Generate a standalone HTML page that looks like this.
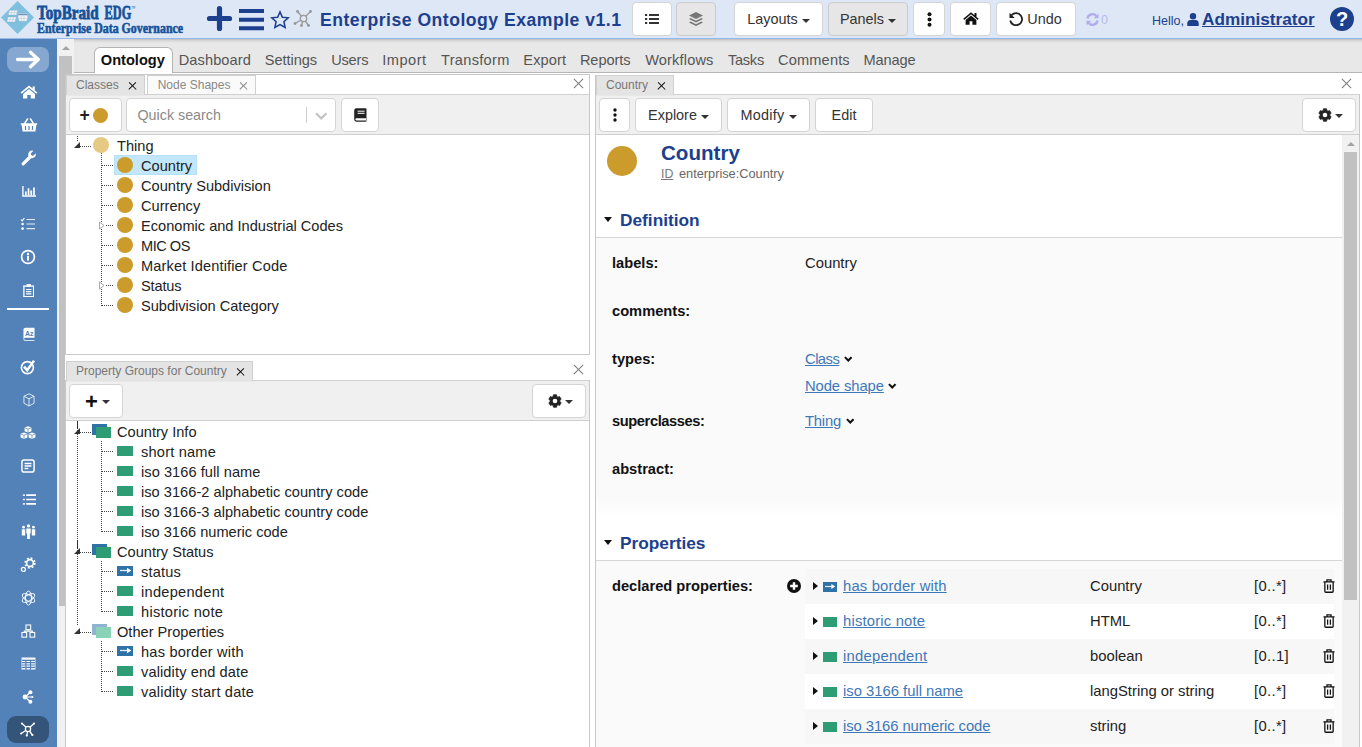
<!DOCTYPE html>
<html lang="en">
<head>
<meta charset="utf-8">
<title>TopBraid EDG - Enterprise Ontology Example v1.1</title>
<style>
*{box-sizing:border-box;margin:0;padding:0}
html,body{width:1362px;height:747px;overflow:hidden;background:#fff}
body{font-family:"Liberation Sans",sans-serif;font-size:14.6px;color:#222;position:relative}
.abs{position:absolute}
a{color:#3f78b8;text-decoration:underline}
/* header */
#hdr{position:absolute;left:0;top:0;width:1362px;height:40px;background:#dee7f6;border-bottom:1px solid #b9d0f1}
#hdr:after{content:"";position:absolute;left:0;top:38px;width:100%;height:1px;background:#94b8ea}
.logo1{position:absolute;left:37px;top:.6px;-webkit-text-stroke:.8px #13529a;word-spacing:2.700px;font-family:"Liberation Serif",serif;font-weight:bold;font-size:18.800px;color:#13529a;transform-origin:0 0;transform:scaleX(.805);white-space:nowrap;line-height:24px}
.logo2{position:absolute;left:37px;top:20px;-webkit-text-stroke:.55px #13529a;font-family:"Liberation Serif",serif;font-weight:bold;font-size:14px;color:#13529a;transform-origin:0 0;transform:scaleX(.85);white-space:nowrap;line-height:18px}
.title{position:absolute;left:320px;top:8px;font-weight:bold;font-size:17.6px;letter-spacing:.5px;color:#1c3f8e;white-space:nowrap;line-height:24px}
.btn{position:absolute;background:#fff;border:1px solid #d4d4d4;border-radius:4px;height:33.5px;top:2.2px;line-height:32.9px;text-align:center;color:#333;font-size:14.4px;white-space:nowrap}
.btn.pb{line-height:33.2px}
.btn.grey{background:#e6e6e6;border-color:#ccc}
.caret{display:inline-block;width:0;height:0;border-left:4px solid transparent;border-right:4px solid transparent;border-top:4px solid #333;vertical-align:middle;margin-left:4px;margin-top:1px}
/* sidebar */
#side{position:absolute;left:0;top:39px;width:57px;height:708px;background:#5282b8}
/* scroll strip */
#strip{position:absolute;left:57px;top:39px;width:17px;height:708px;background:#f1f1f1}
#strip .thumb{position:absolute;left:2px;top:17px;width:13px;height:570px;background:#c1c1c1}
/* tab bar */
#tabs{position:absolute;left:74px;top:39px;width:1288px;height:34px;background:linear-gradient(#bcbcbc,#d6d6d6 1.500px,#e8e8e8 4px);border-bottom:1px solid #b6b6b6}
#tabs span{position:absolute;top:11px;line-height:20px;color:#555;white-space:nowrap}
#tabs .act{position:absolute;left:20px;top:8px;width:78.500px;height:26px;background:#fff;border:1px solid #b4b4b4;border-bottom:none;border-radius:6px 6px 0 0}
/* panels */
.panel{position:absolute;background:#fff;border:1px solid #c8c8c8}
.ptab{z-index:2;box-shadow:0 1px 0 #e8e8e8;position:absolute;height:20px;background:#e4e4e4;border:1px solid #d0d0d0;border-bottom:none;font-size:12px;color:#777;line-height:19px;padding-left:9px;white-space:nowrap}
.ptab.in{background:#fafafa;color:#888;box-shadow:none;z-index:0}
.ptab i{position:absolute;right:8px;top:6px;width:8px;height:8px;font-size:0}
.ptab i:before,.ptab i:after{content:"";position:absolute;left:3.500px;top:-1.200px;width:1.100px;height:9.600px;background:#111}
.ptab i:before{transform:rotate(45deg)}.ptab i:after{transform:rotate(-45deg)}
.ptab.in i:before,.ptab.in i:after{background:#888}
.tbar{position:absolute;height:40px;background:#f0f0f0;border-top:1px solid #d0d0d0;border-bottom:1px solid #d0d0d0}
.px{position:absolute;width:9px;height:9px}
.px:before,.px:after{content:"";position:absolute;left:4px;top:-2px;width:.9px;height:13px;background:#7a7a7a}
.px:before{transform:rotate(45deg)}.px:after{transform:rotate(-45deg)}
.tree{position:absolute;font-size:14.6px;line-height:20px;white-space:nowrap;color:#222}
.circ{position:absolute;width:16px;height:16px;border-radius:50%;background:#cb9b2c}
.dot-h{position:absolute;height:1px;border-top:1px dotted #555}
.dot-v{position:absolute;width:1px;border-left:1px dotted #555}
.gi{position:absolute;width:15.500px;height:9.500px;background:#2e9c74}
.bi{position:absolute;width:15.500px;height:9.500px;background:#2f72a8}
.lab{position:absolute;font-weight:bold;font-size:14.67px;color:#111;white-space:nowrap;line-height:20px}
.val{position:absolute;white-space:nowrap;line-height:20px;color:#222;font-size:14.800px}
.sec{margin-top:.2px;position:absolute;font-weight:bold;font-size:17.300px;color:#1c3f8e;white-space:nowrap;line-height:22px}
.row{position:absolute;left:805px;width:529px;height:35px}
.row.g{background:#f5f5f5}
</style>
</head>
<body>
<div id="hdr">
<svg class="abs" style="left:0;top:0" width="36" height="36" viewBox="0 0 36 36">
<polygon points="17.500,1 34,17.500 17.500,34 1,17.500" fill="#7fc0de"/>
<g fill="#f4f6f8" stroke="#8aa4c4" stroke-width=".35">
<polygon points="9.400,10.300 17.600,10.300 16.500,15 8.200,15"/><polygon points="8.100,17 16.300,17 15,21.900 6.800,21.900"/>
<polygon points="18.700,13.600 27.200,13.600 27.800,17.300 26.800,21.300 19.200,21.300 18,17.600"/>
</g>
<g stroke="#a9bdd6" stroke-width=".5" fill="none"><path d="M12.100 10.300L10.900 15M14.800 10.300L13.700 15M8.800 12.600H17M10.800 17L9.500 21.900M13.500 17L12.200 21.900M7.500 19.400H15.700M21.300 15.400V21.300M24 15.400V21.300M18.200 18.300H27.400"/><path d="M18.600 14.600H27.300" stroke="#6f93c4" stroke-width="1.300"/></g>
</svg>
<div class="logo1">TopBraid <span style="display:inline-block;transform:scaleX(.81);transform-origin:0 0">EDG<span style="font-size:6px;vertical-align:top;position:relative;top:-5px;-webkit-text-stroke:0;font-weight:normal">™</span></span></div>
<div class="logo2">Enterprise Data Governance</div>
<svg class="abs" style="left:206px;top:5px" width="27" height="27" viewBox="0 0 27 27"><path d="M13.5 3.5v20M3.5 13.5h20" stroke="#1c3f8e" stroke-width="5.2" stroke-linecap="round" fill="none"/></svg>
<svg class="abs" style="left:239px;top:8px" width="25" height="23" viewBox="0 0 25 23"><path d="M0 3h25M0 11.8h25M0 20.2h25" stroke="#1c3f8e" stroke-width="4" fill="none"/></svg>
<svg class="abs" style="left:269.500px;top:9.500px" width="20" height="19" viewBox="0 0 21 20"><polygon points="10.5,2 13,7.6 19.2,8.2 14.6,12.4 15.9,18.4 10.5,15.3 5.1,18.4 6.4,12.4 1.8,8.2 8,7.6" fill="none" stroke="#1c3f8e" stroke-width="1.6" stroke-linejoin="miter"/></svg>
<svg class="abs" style="left:293px;top:9px" width="21" height="19" viewBox="0 0 21 19"><g stroke="#999" stroke-width="1.3" fill="none"><path d="M10.5 9.5L4.5 2.5M10.5 9.5L17.5 2.5M10.5 9.5L2 14.5M10.5 9.5L8.5 16.5M10.5 9.5L15.5 16.5"/><circle cx="10.5" cy="9.5" r="3.2" fill="#dfe7f6"/></g><g fill="#999"><circle cx="4.5" cy="2.5" r="1.4"/><circle cx="17.5" cy="2.5" r="1.4"/><circle cx="2" cy="14.5" r="1.4"/><circle cx="8.5" cy="16.5" r="1.4"/><circle cx="15.5" cy="16.5" r="1.4"/></g></svg>
<div class="title">Enterprise Ontology Example v1.1</div>
<div class="btn" style="left:632px;width:40px"><svg class="abs" style="left:12px;top:10px" width="14" height="12" viewBox="0 0 14 12"><g fill="#333"><rect x="0" y="1" width="2.2" height="2"/><rect x="0" y="5" width="2.2" height="2"/><rect x="0" y="9" width="2.2" height="2"/><rect x="4" y="1" width="10" height="2"/><rect x="4" y="5" width="10" height="2"/><rect x="4" y="9" width="10" height="2"/></g></svg></div>
<div class="btn grey" style="left:676px;width:40px"><svg class="abs" style="left:12px;top:9px" width="14" height="15" viewBox="0 0 14 15"><g fill="#777"><polygon points="7,0 14,3.5 7,7 0,3.5"/><polygon points="1.6,6 7,8.7 12.4,6 14,7 7,10.5 0,7"/><polygon points="1.6,9.5 7,12.2 12.4,9.5 14,10.5 7,14 0,10.5"/></g></svg></div>
<div class="btn" style="left:734px;width:89px">Layouts<span class="caret"></span></div>
<div class="btn grey" style="left:828px;width:80px">Panels<span class="caret"></span></div>
<div class="btn" style="left:913px;width:32px"><svg class="abs" style="left:13px;top:9px" width="5" height="15" viewBox="0 0 5 15"><g fill="#111"><circle cx="2.5" cy="2.3" r="2"/><circle cx="2.5" cy="7.5" r="2"/><circle cx="2.5" cy="12.700" r="2"/></g></svg></div>
<div class="btn" style="left:950px;width:41px"><svg class="abs" style="left:12px;top:9px" width="16" height="13" viewBox="0 0 16 13"><path d="M8 0.3L0.3 6.8l1 1.1L8 2.3l6.7 5.6 1-1.1-2.2-1.9V1h-2v2.2zM2.6 8v4.7h4V9.2h2.8v3.5h4V8L8 3.6z" fill="#111"/></svg></div>
<div class="btn" style="left:996px;width:80px;padding-left:17px"><svg class="abs" style="left:12px;top:9px" width="14" height="14" viewBox="0 0 14 14"><path d="M2.6 3.2A6 6 0 1 1 1.2 8.5" fill="none" stroke="#222" stroke-width="1.8"/><polygon points="0.5,0.8 0.5,6 5.7,6" fill="#222"/></svg>Undo</div>
<svg class="abs" style="left:1086px;top:13px" width="13" height="13" viewBox="0 0 13 13"><path d="M1.5 5.5A5 5 0 0 1 10.3 3M11.5 7.5A5 5 0 0 1 2.7 10" fill="none" stroke="#b3abf2" stroke-width="2.4"/><polygon points="12.5,0.5 12.5,5.3 7.7,5.3" fill="#b3abf2"/><polygon points="0.5,12.5 0.5,7.7 5.3,7.7" fill="#b3abf2"/></svg>
<div class="abs" style="left:1101px;top:10px;font-size:12.5px;color:#b5b9f0;line-height:20px">0</div>
<div class="abs" style="left:1152px;top:11px;font-size:12.5px;color:#1c3f8e;line-height:20px">Hello,</div>
<svg class="abs" style="left:1187px;top:13px" width="12" height="13" viewBox="0 0 12 13"><circle cx="6" cy="3.3" r="3.2" fill="#1c3f8e"/><path d="M0.3 13v-2.8c0-2 1.6-3.2 3.2-3.2h5c1.6 0 3.2 1.2 3.2 3.2V13z" fill="#1c3f8e"/></svg>
<div class="abs" style="left:1202px;top:7px;font-size:17.2px;font-weight:bold;color:#1c3f8e;line-height:24px;text-decoration:underline">Administrator</div>
<div class="abs" style="left:1330px;top:7px;width:24px;height:24px;border-radius:50%;background:#1c3f8e;color:#fff;font-weight:bold;font-size:20px;line-height:24px;text-align:center">?</div>
</div>
<div id="side">
<div class="abs" style="left:7px;top:8px;width:42px;height:25px;border-radius:8px;background:#86a7cf"></div>
<svg class="abs" style="left:16px;top:11px" width="25" height="19" viewBox="0 0 25 19"><path d="M1.500 9.500h20.500M14.500 2.300l7.800 7.200-7.800 7.200" fill="none" stroke="#fff" stroke-width="3.300" stroke-linecap="round" stroke-linejoin="round"/></svg>
<!-- home y=92 -->
<svg class="abs" style="left:20px;top:46px" width="18" height="14" viewBox="0 0 18 14"><path d="M9 0.6L0.6 7.6l1 1.2L9 2.7l7.4 6.1 1-1.2-2.6-2.2V1.4h-2.2v2.2zM3 8.9V13.6h4.3V10h3.4v3.6H15V8.9L9 4z" fill="#fff"/></svg>
<!-- basket y=125 -->
<svg class="abs" style="left:20px;top:79px" width="18" height="14" viewBox="0 0 18 14"><path d="M0.8 5.2h16.4v1.6h-0.8l-1 6.6H2.6l-1-6.6H0.8z" fill="#fff"/><path d="M4.5 5.6L7.5 1M13.5 5.6L10.5 1" stroke="#fff" stroke-width="1.5" fill="none" stroke-linecap="round"/><path d="M5.5 8v4M9 8v4M12.5 8v4" stroke="#5282b8" stroke-width="1.2"/></svg>
<!-- wrench y=158 -->
<svg class="abs" style="left:21px;top:111px" width="16" height="16" viewBox="0 0 16 16"><path d="M2.2 13.8L9.5 6.5" stroke="#fff" stroke-width="3.2" stroke-linecap="round" fill="none"/><path d="M14.8 3.2l-2.6 2.6-2-0.4-0.4-2 2.6-2.6a4 4 0 0 0-5 5.2l1.6 1.6a4 4 0 0 0 5.8-4.4z" fill="#fff"/></svg>
<!-- chart y=191 -->
<svg class="abs" style="left:21.500px;top:146.500px" width="14.500" height="11" viewBox="0 0 16 12"><path d="M1 0v11h15" stroke="#fff" stroke-width="1.5" fill="none"/><path d="M4.2 10V6M7.2 10V2.5M10.2 10V5M13.2 10V1.5" stroke="#fff" stroke-width="1.9" fill="none"/></svg>
<!-- tasks y=224 -->
<svg class="abs" style="left:20px;top:178px" width="16" height="14" viewBox="0 0 16 14"><path d="M1 2.6l1.2 1.2L4.4 1" stroke="#fff" stroke-width="1.2" fill="none"/><circle cx="2.6" cy="7" r="1.300" fill="#fff"/><circle cx="2.6" cy="11.6" r="1.300" fill="#fff"/><path d="M6.5 2.5H15M6.5 7H15M6.5 11.6H15" stroke="#e4ecf5" stroke-width="1.200"/></svg>
<!-- info y=257 -->
<svg class="abs" style="left:20px;top:210px" width="16" height="16" viewBox="0 0 16 16"><circle cx="8" cy="8" r="6.4" fill="none" stroke="#fff" stroke-width="1.7"/><circle cx="8" cy="4.9" r="1.2" fill="#fff"/><rect x="7" y="6.8" width="2" height="4.8" fill="#fff"/></svg>
<!-- clipboard y=290 -->
<svg class="abs" style="left:22.500px;top:244.500px" width="11.500" height="13.500" viewBox="0 0 13 15"><rect x="1" y="2.2" width="11" height="12" fill="none" stroke="#fff" stroke-width="1.5"/><rect x="4" y="0" width="5" height="3" fill="#fff"/><path d="M3.5 6h6M3.5 8.5h6M3.5 11h6" stroke="#fff" stroke-width="1.2"/></svg>
<div class="abs" style="left:7px;top:269.300px;width:42px;height:1.800px;background:#fff"></div>
<!-- Az book y=334 -->
<svg class="abs" style="left:22.500px;top:288px" width="12" height="14.300" viewBox="0 0 13 15"><path d="M2.5 0.5h10v10.8h-10a1.3 1.3 0 0 0 0 2.6h10v0.8h-10a2 2 0 0 1-2-2V2.5a2 2 0 0 1 2-2z" fill="#fff"/><text x="2.3" y="9.6" font-family="Liberation Sans" font-weight="bold" font-size="7.5" fill="#5282b8" textLength="9">Az</text></svg>
<!-- check circle y=367 -->
<svg class="abs" style="left:20px;top:320px" width="16" height="16" viewBox="0 0 16 16"><circle cx="7.4" cy="8.6" r="6" fill="none" stroke="#fff" stroke-width="1.6"/><path d="M4 7.600l3.200 3.600 6.800-9.600" fill="none" stroke="#fff" stroke-width="2.500"/></svg>
<!-- cube y=400 -->
<svg class="abs" style="left:22.500px;top:354px" width="12" height="14" viewBox="0 0 13 15"><path d="M6.5 0.8l5.5 2.6v7.6l-5.5 3-5.5-3V3.4zM1 3.4l5.5 2.8 5.5-2.8M6.5 6.2V14" fill="none" stroke="#e8eef6" stroke-width="1"/></svg>
<!-- cubes y=433 -->
<svg class="abs" style="left:20px;top:387px" width="16" height="14" viewBox="0 0 16 14"><g fill="#fff"><path d="M8 0.2l3.4 1.4v3.6L8 6.6 4.6 5.2V1.6z"/><path d="M4 6.4l3.4 1.4v3.8L4 13 0.6 11.6V7.8z"/><path d="M12 6.4l3.4 1.4v3.8L12 13 8.6 11.6V7.8z"/></g><g stroke="#5282b8" stroke-width=".7" fill="none"><path d="M4.8 1.8L8 3.1l3.2-1.3M8 3.1v3.3M0.8 8L4 9.3l3.2-1.3M4 9.3v3.5M8.8 8L12 9.3l3.2-1.3M12 9.3v3.5"/></g></svg>
<!-- doc y=466 -->
<svg class="abs" style="left:21px;top:420px" width="14" height="14" viewBox="0 0 15 15"><rect x="1" y="1" width="13" height="13" rx="2.2" fill="none" stroke="#fff" stroke-width="1.6"/><path d="M3.8 4.8h7.4M3.8 7.5h7.4M3.8 10.2h4" stroke="#fff" stroke-width="1.4"/></svg>
<!-- list y=499 -->
<svg class="abs" style="left:21.500px;top:454.500px" width="14.500" height="11" viewBox="0 0 15 12"><path d="M0.5 1.2h2.4M0.5 6h2.4M0.5 10.8h2.4" stroke="#dfe8f3" stroke-width="1.8"/><path d="M4.2 1.2H15M4.2 6H15M4.2 10.8H15" stroke="#fff" stroke-width="1.8"/></svg>
<!-- people y=532 -->
<svg class="abs" style="left:21px;top:485px" width="15" height="15" viewBox="0 0 15 15"><g fill="#fff"><circle cx="7.5" cy="1.9" r="1.7"/><path d="M5.3 4.4h4.4v5.2H8.9V15H6.1V9.6H5.3z"/><circle cx="2.6" cy="3.2" r="1.4"/><path d="M0.8 5.3h3.4v6.2H0.8z"/><circle cx="12.4" cy="3.2" r="1.4"/><path d="M10.8 5.3h3.4v6.2h-3.4z"/></g></svg>
<!-- gears y=565 -->
<svg class="abs" style="left:20px;top:518px" width="16" height="16" viewBox="0 0 16 16"><circle cx="10" cy="6" r="3.4" fill="none" stroke="#fff" stroke-width="1.6"/><circle cx="10" cy="6" r="4.9" fill="none" stroke="#fff" stroke-width="1.6" stroke-dasharray="1.9 1.95"/><circle cx="3.4" cy="12.4" r="2" fill="none" stroke="#fff" stroke-width="1.3"/></svg>
<!-- atom y=598 -->
<svg class="abs" style="left:21px;top:551px" width="15" height="16" viewBox="0 0 15 16"><g fill="none" stroke="#fff" stroke-width="1"><ellipse cx="7.5" cy="8" rx="3" ry="7"/><ellipse cx="7.5" cy="8" rx="3" ry="7" transform="rotate(60 7.5 8)"/><ellipse cx="7.5" cy="8" rx="3" ry="7" transform="rotate(-60 7.5 8)"/></g></svg>
<!-- hierarchy y=631 -->
<svg class="abs" style="left:20.500px;top:584.500px" width="15" height="14.500" viewBox="0 0 16 15"><g fill="none" stroke="#fff" stroke-width="1.150"><rect x="5.3" y="0.8" width="5" height="5"/><rect x="1" y="8.8" width="5" height="5"/><rect x="9.6" y="8.8" width="5" height="5"/><path d="M7.8 5.8v1.6M3.5 8.8V7.4h8.6v1.4"/></g></svg>
<!-- table y=663 -->
<svg class="abs" style="left:20.500px;top:617.500px" width="15" height="13" viewBox="0 0 16 14"><rect x="0.5" y="0.5" width="15" height="13" fill="#f2f6fa"/><path d="M1 3.6h14M1 6.1h14M1 8.6h14M1 11.1h14M5.2 3.6v10M10.2 3.6v10" stroke="#5282b8" stroke-width="1.250"/></svg>
<!-- share y=697 -->
<svg class="abs" style="left:22px;top:651px" width="12" height="14" viewBox="0 0 12 14"><g fill="#fff"><circle cx="3" cy="7" r="2.4"/><circle cx="8.4" cy="2.3" r="2"/><circle cx="8.4" cy="11.7" r="2"/><circle cx="10.4" cy="7" r="1"/></g><path d="M3 7l5.4-4.7M3 7l5.4 4.7M3 7h7.4" stroke="#fff" stroke-width="1.2"/></svg>
<div class="abs" style="left:7px;top:677px;width:42px;height:27px;border-radius:9px;background:#34547a"></div>
<svg class="abs" style="left:20px;top:683px" width="16" height="15" viewBox="0 0 16 15"><g stroke="#fff" stroke-width="1.3" fill="none"><path d="M8 7L2 1.5M8 7L14 1.5M8 7L1.2 11.5M8 7L6.8 13.6M8 7L12.4 13"/><circle cx="8" cy="7" r="2.6" fill="#34547a"/></g><g fill="#fff"><circle cx="2" cy="1.5" r="1.1"/><circle cx="14" cy="1.5" r="1.1"/><circle cx="1.2" cy="11.5" r="1.1"/><circle cx="6.8" cy="13.6" r="1.1"/><circle cx="12.4" cy="13" r="1.1"/></g></svg>
</div>
<div id="strip"><div class="thumb" style="top:17px;height:550px"></div><div class="abs" style="left:5px;top:7px;width:0;height:0;border-left:4px solid transparent;border-right:4px solid transparent;border-bottom:4px solid #a3a3a3"></div></div>
<div id="tabs"><div class="act"></div>
<span style="left:26.8px;letter-spacing:0px;font-weight:bold;color:#111">Ontology</span>
<span style="left:104.7px;letter-spacing:0.1px">Dashboard</span>
<span style="left:190.8px;letter-spacing:-0.07px">Settings</span>
<span style="left:257.2px;letter-spacing:-0.2px">Users</span>
<span style="left:308.3px;letter-spacing:0.5px">Import</span>
<span style="left:367.0px;letter-spacing:0.3px">Transform</span>
<span style="left:449.3px;letter-spacing:0.1px">Export</span>
<span style="left:505.9px;letter-spacing:-0.07px">Reports</span>
<span style="left:571.2px;letter-spacing:0.15px">Workflows</span>
<span style="left:653.9px;letter-spacing:-0.25px">Tasks</span>
<span style="left:704.1px;letter-spacing:0.14px">Comments</span>
<span style="left:789.5px;letter-spacing:-0.1px">Manage</span>
</div>
<div class="abs" style="left:65px;top:74px;width:1297px;height:673px;background:#fff"></div>
<div class="panel" style="left:65px;top:74px;width:525px;height:281px"></div>
<div class="ptab" style="left:66px;top:75px;width:79px">Classes<i>×</i></div>
<div class="ptab in" style="left:147px;top:75px;width:108.500px;padding-left:9.700px">Node Shapes<i style="right:7.300px">×</i></div>
<div class="px" style="left:574px;top:79px"></div>
<div class="tbar" style="left:66px;top:94px;width:523px;height:41px"></div>
<div class="btn pb" style="left:69px;top:98px;width:53px"><span class="abs" style="left:9.500px;top:0;font-size:17.500px;font-weight:bold;color:#222">+</span><span class="circ" style="left:23px;top:8.500px;width:15px;height:15px"></span></div>
<div class="btn pb" style="left:126px;top:98px;width:210px;text-align:left;padding-left:10.500px;color:#8a8a8a;font-size:14.300px">Quick search<span class="abs" style="left:179px;top:8px;width:1px;height:16px;background:#ccc"></span><svg class="abs" style="left:187.500px;top:12.500px" width="12.500" height="8" viewBox="0 0 12.500 8"><path d="M1 1.200l5.250 5.200L11.500 1.200" fill="none" stroke="#c4c4c4" stroke-width="2.200"/></svg></div>
<div class="btn pb" style="left:341px;top:98px;width:38px"><svg class="abs" style="left:12px;top:9px" width="13" height="14" viewBox="0 0 13 14"><path d="M2.300 0.300h9.200a1 1 0 0 1 1 1v11.400a1 1 0 0 1-1 1h-9.200a2.100 2.100 0 0 1-2.100-2.100V2.400a2.100 2.100 0 0 1 2.100-2.100z" fill="#222"/><path d="M3.600 3.200h7M3.600 5.300h7" stroke="#fff" stroke-width="1"/><path d="M2.500 10.200h9.600v2.300h-9.600a1.150 1.150 0 0 1 0-2.300z" fill="#fff"/></svg></div>
<svg class="abs" style="left:66px;top:135px" width="60" height="180" viewBox="0 0 60 180">
<g stroke="#444" stroke-width="1" stroke-dasharray="1 1" fill="none"><path d="M11.5 1v6M14 11.5h11M35.500 18v153M36 30.500h12M36 50.500h12M36 70.500h12M40 90.500h8M36 110.500h12M36 130.500h12M40 150.500h8M36 170.500h12"/></g>
<polygon points="8,13 14,13 14,7" fill="#333"/>
<polygon points="33.5,87 38,90.500 33.5,94" fill="#fff" stroke="#aaa" stroke-width="1"/><polygon points="33.5,147 38,150.500 33.5,154" fill="#fff" stroke="#aaa" stroke-width="1"/>
</svg>
<div class="circ" style="left:93px;top:137px;background:#e6c982"></div>
<div class="tree" style="left:117px;top:136px">Thing</div>
<div class="abs" style="left:114px;top:155px;width:83px;height:20px;background:#c2e7fb;border:1px solid #b5e0f8"></div>
<div class="circ" style="left:117px;top:157px"></div><div class="tree" style="left:141px;top:156px;letter-spacing:0px">Country</div>
<div class="circ" style="left:117px;top:177px"></div><div class="tree" style="left:141px;top:176px;letter-spacing:0px">Country Subdivision</div>
<div class="circ" style="left:117px;top:197px"></div><div class="tree" style="left:141px;top:196px;letter-spacing:0px">Currency</div>
<div class="circ" style="left:117px;top:217px"></div><div class="tree" style="left:141px;top:216px;letter-spacing:0px">Economic and Industrial Codes</div>
<div class="circ" style="left:117px;top:237px"></div><div class="tree" style="left:141px;top:236px;letter-spacing:-0.5px">MIC OS</div>
<div class="circ" style="left:117px;top:257px"></div><div class="tree" style="left:141px;top:256px;letter-spacing:0.13px">Market Identifier Code</div>
<div class="circ" style="left:117px;top:277px"></div><div class="tree" style="left:141px;top:276px;letter-spacing:-0.16px">Status</div>
<div class="circ" style="left:117px;top:297px"></div><div class="tree" style="left:141px;top:296px;letter-spacing:0px">Subdivision Category</div>
<div class="panel" style="left:65px;top:380px;width:525px;height:380px"></div>
<div class="ptab" style="left:66px;top:361px;width:187px">Property Groups for Country<i>×</i></div>
<div class="px" style="left:574px;top:365px"></div>
<div class="tbar" style="left:66px;top:380px;width:523px;height:41px"></div>
<div class="btn pb" style="left:69px;top:384px;width:54px"><span class="abs" style="left:15px;top:0px;font-size:22px;font-weight:bold;color:#111">+</span><span class="caret" style="position:absolute;left:32px;top:15px;margin:0"></span></div>
<div class="btn pb" style="left:532px;top:384px;width:54px"><svg class="abs" style="left:15.400px;top:8.800px" width="14" height="14" viewBox="0 0 14 14"><path d="M5.20 2.44L5.41 0.80L8.59 0.80L8.80 2.44L10.04 3.16L11.57 2.52L13.16 5.28L11.85 6.28L11.85 7.72L13.16 8.72L11.57 11.48L10.04 10.84L8.80 11.56L8.59 13.20L5.41 13.20L5.20 11.56L3.96 10.84L2.43 11.48L0.84 8.72L2.15 7.72L2.15 6.28L0.84 5.28L2.43 2.52L3.96 3.16z" fill="#222" stroke="#222" stroke-width="0.8" stroke-linejoin="round"/><circle cx="7" cy="7" r="2.3" fill="#fff"/></svg><span class="caret" style="position:absolute;left:32px;top:15px;margin:0"></span></div>
<svg class="abs" style="left:66px;top:421px" width="60" height="290" viewBox="0 0 60 290">
<g stroke="#444" stroke-width="1" stroke-dasharray="1 1" fill="none"><path d="M11.5 1v203M14 11.500h11M14 131.500h11M14 211.500h11M35.500 20v91M36 30.500h11M36 50.500h11M36 70.500h11M36 90.500h11M36 110.500h11M35.500 140v51M36 150.500h11M36 170.500h11M36 190.500h11M35.500 220v51M36 230.500h11M36 250.500h11M36 270.500h11"/></g>
<path d="M11.500 0v8M11.500 119v9" stroke="#333" stroke-width="1"/>
<polygon points="8,13 14,13 14,7" fill="#333"/><polygon points="8,133 14,133 14,127" fill="#333"/><polygon points="8,213 14,213 14,207" fill="#333"/>
</svg>
<div class="abs" style="left:92px;top:424px;width:15px;height:11px;background:#2f72a8"></div><div class="abs" style="left:96px;top:427px;width:15px;height:11px;background:#2e9c74"></div>
<div class="tree" style="left:117px;top:422px">Country Info</div>
<div class="gi" style="left:117px;top:446px"></div>
<div class="tree" style="left:141px;top:442px;letter-spacing:0.200px">short name</div>
<div class="gi" style="left:117px;top:466px"></div>
<div class="tree" style="left:141px;top:462px;letter-spacing:0.056px">iso 3166 full name</div>
<div class="gi" style="left:117px;top:486px"></div>
<div class="tree" style="left:141px;top:482px;letter-spacing:0.029px">iso 3166-2 alphabetic country code</div>
<div class="gi" style="left:117px;top:506px"></div>
<div class="tree" style="left:141px;top:502px;letter-spacing:0.029px">iso 3166-3 alphabetic country code</div>
<div class="gi" style="left:117px;top:526px"></div>
<div class="tree" style="left:141px;top:522px;letter-spacing:0.000px">iso 3166 numeric code</div>
<div class="abs" style="left:92px;top:544px;width:15px;height:11px;background:#2f72a8"></div><div class="abs" style="left:96px;top:547px;width:15px;height:11px;background:#2e9c74"></div>
<div class="tree" style="left:117px;top:542px">Country Status</div>
<div class="bi" style="left:117px;top:566px"><svg class="abs" style="left:2.500px;top:1.200px" width="11.500" height="7" viewBox="0 0 11.500 7"><path d="M0 3.500h8" stroke="#e8eef5" stroke-width="1.300"/><polygon points="7,0.800 11.200,3.500 7,6.200" fill="#fff"/></svg></div>
<div class="tree" style="left:141px;top:562px;letter-spacing:0.167px">status</div>
<div class="gi" style="left:117px;top:586px"></div>
<div class="tree" style="left:141px;top:582px;letter-spacing:0.273px">independent</div>
<div class="gi" style="left:117px;top:606px"></div>
<div class="tree" style="left:141px;top:602px;letter-spacing:0.269px">historic note</div>
<div class="abs" style="left:92px;top:624px;width:15px;height:11px;background:#8fb3d2"></div><div class="abs" style="left:96px;top:627px;width:15px;height:11px;background:#8ad3b8"></div>
<div class="tree" style="left:117px;top:622px">Other Properties</div>
<div class="bi" style="left:117px;top:646px"><svg class="abs" style="left:2.500px;top:1.200px" width="11.500" height="7" viewBox="0 0 11.500 7"><path d="M0 3.500h8" stroke="#e8eef5" stroke-width="1.300"/><polygon points="7,0.800 11.200,3.500 7,6.200" fill="#fff"/></svg></div>
<div class="tree" style="left:141px;top:642px;letter-spacing:0.200px">has border with</div>
<div class="gi" style="left:117px;top:666px"></div>
<div class="tree" style="left:141px;top:662px;letter-spacing:0.118px">validity end date</div>
<div class="gi" style="left:117px;top:686px"></div>
<div class="tree" style="left:141px;top:682px;letter-spacing:0.184px">validity start date</div>
<div class="panel" style="left:595px;top:94px;width:765px;height:690px"></div>
<div class="abs" style="left:595px;top:75px;width:1px;height:20px;background:#c8c8c8"></div>
<div class="ptab" style="left:596px;top:75px;width:78px">Country<i>×</i></div>
<div class="px" style="left:1342px;top:79px"></div>
<div class="tbar" style="left:596px;top:94px;width:763px;height:41px"></div>
<div class="btn pb" style="left:599px;top:98px;width:31px"><svg class="abs" style="left:13px;top:9px" width="4" height="14" viewBox="0 0 4 14"><g fill="#111"><circle cx="2" cy="2" r="1.700"/><circle cx="2" cy="7" r="1.700"/><circle cx="2" cy="12" r="1.700"/></g></svg></div>
<div class="btn pb" style="left:635px;top:98px;width:87px">Explore<span class="caret"></span></div>
<div class="btn pb" style="left:727px;top:98px;width:83px"><span style="letter-spacing:.3px">Modify</span><span class="caret"></span></div>
<div class="btn pb" style="left:815px;top:98px;width:58px">Edit</div>
<div class="btn pb" style="left:1302px;top:98px;width:54px"><svg class="abs" style="left:15.400px;top:8.800px" width="14" height="14" viewBox="0 0 14 14"><path d="M5.20 2.44L5.41 0.80L8.59 0.80L8.80 2.44L10.04 3.16L11.57 2.52L13.16 5.28L11.85 6.28L11.85 7.72L13.16 8.72L11.57 11.48L10.04 10.84L8.80 11.56L8.59 13.20L5.41 13.20L5.20 11.56L3.96 10.84L2.43 11.48L0.84 8.72L2.15 7.72L2.15 6.28L0.84 5.28L2.43 2.52L3.96 3.16z" fill="#222" stroke="#222" stroke-width="0.8" stroke-linejoin="round"/><circle cx="7" cy="7" r="2.3" fill="#fff"/></svg><span class="caret" style="position:absolute;left:32px;top:15px;margin:0"></span></div>
<div class="abs" style="left:1342px;top:135px;width:17px;height:612px;background:#f1f1f1"></div>
<div class="abs" style="left:1344px;top:152px;width:13px;height:447.500px;background:#c1c1c1"></div>
<div class="abs" style="left:1346.500px;top:142px;width:0;height:0;border-left:4px solid transparent;border-right:4px solid transparent;border-bottom:4px solid #a3a3a3"></div>
<div class="abs" style="left:607px;top:146px;width:30px;height:30px;border-radius:50%;background:#cb9b2c"></div>
<div class="abs" style="left:661px;top:140px;font-weight:bold;font-size:20.600px;color:#1c3f8e;line-height:26px">Country</div>
<div class="abs" style="left:661px;top:165px;font-size:12.300px;color:#777;line-height:18px"><span style="text-decoration:underline">ID</span></div>
<div class="abs" style="left:679px;top:165px;font-size:12.760px;color:#666;line-height:18px">enterprise:Country</div>
<div class="abs" style="left:604px;top:217px;width:0;height:0;border-left:4.400px solid transparent;border-right:4.400px solid transparent;border-top:5.300px solid #111"></div>
<div class="sec" style="left:620px;top:209px">Definition</div>
<div class="abs" style="left:596px;top:237px;width:746px;height:283px;background:linear-gradient(#fafafa 258px,#fff 283px);border-top:1px solid #d6d6d6"></div>
<div class="lab" style="left:612px;top:253px;letter-spacing:0px">labels:</div>
<div class="val" style="left:805px;top:253px">Country</div>
<div class="lab" style="left:612px;top:301px;letter-spacing:0px">comments:</div>
<div class="lab" style="left:612px;top:349px;letter-spacing:0px">types:</div>
<div class="val" style="left:805px;top:349px"><a style="letter-spacing:-0.55px">Class</a><svg style="margin-left:4.500px;vertical-align:2px" width="8.500" height="6" viewBox="0 0 9 6"><path d="M1 1l3.500 3.500L8 1" fill="none" stroke="#111" stroke-width="2.200"/></svg></div>
<div class="val" style="left:805px;top:376px"><a style="letter-spacing:-0.1px">Node shape</a><svg style="margin-left:4.500px;vertical-align:2px" width="8.500" height="6" viewBox="0 0 9 6"><path d="M1 1l3.500 3.500L8 1" fill="none" stroke="#111" stroke-width="2.200"/></svg></div>
<div class="lab" style="left:612px;top:411px;letter-spacing:-0.4px">superclasses:</div>
<div class="val" style="left:805px;top:411px"><a style="letter-spacing:-0.2px">Thing</a><svg style="margin-left:4.500px;vertical-align:2px" width="8.500" height="6" viewBox="0 0 9 6"><path d="M1 1l3.500 3.500L8 1" fill="none" stroke="#111" stroke-width="2.200"/></svg></div>
<div class="lab" style="left:612px;top:459px;letter-spacing:0px">abstract:</div>
<div class="abs" style="left:604px;top:540px;width:0;height:0;border-left:4.400px solid transparent;border-right:4.400px solid transparent;border-top:5.300px solid #111"></div>
<div class="sec" style="left:620px;top:532px">Properties</div>
<div class="abs" style="left:596px;top:560px;width:746px;height:187px;background:#fafafa;border-top:1px solid #d6d6d6"></div>
<div class="lab" style="left:612px;top:576px;letter-spacing:0px">declared properties:</div>
<svg class="abs" style="left:787px;top:579px" width="14" height="14" viewBox="0 0 14 14"><circle cx="7" cy="7" r="7" fill="#111"/><path d="M7 3.200v7.600M3.200 7h7.600" stroke="#fff" stroke-width="2.400"/></svg>
<div class="row" style="top:569px;background:#f7f7f7"><div class="abs" style="left:8px;top:13px;width:0;height:0;border-top:4.500px solid transparent;border-bottom:4.500px solid transparent;border-left:5px solid #111"></div><div class="bi" style="left:18px;top:12.500px;width:14px;height:10px"><svg class="abs" style="left:2px;top:1.500px" width="10.500" height="7" viewBox="0 0 11.500 7"><path d="M0 3.500h8" stroke="#e8eef5" stroke-width="1.300"/><polygon points="7,0.800 11.200,3.500 7,6.200" fill="#fff"/></svg></div><div class="val" style="left:38px;top:7px"><a style="letter-spacing:0.17px">has border with</a></div><div class="val" style="left:285px;top:7px">Country</div><div class="val" style="left:449px;top:7px;letter-spacing:.35px">[0..*]</div><svg class="abs" style="left:517.500px;top:10px" width="12" height="14" viewBox="0 0 13 15" preserveAspectRatio="none"><g fill="none" stroke="#111" stroke-width="1.400"><path d="M0.500 3h12M4.300 3V1h4.400v2M2 3v10.200a1 1 0 0 0 1 1h7a1 1 0 0 0 1-1V3M5 5.800v5.600M8 5.800v5.600"/></g></svg></div>
<div class="row" style="top:604px;background:#fff"><div class="abs" style="left:8px;top:13px;width:0;height:0;border-top:4.500px solid transparent;border-bottom:4.500px solid transparent;border-left:5px solid #111"></div><div class="gi" style="left:18px;top:12.500px;width:14px;height:10px"></div><div class="val" style="left:38px;top:7px"><a style="letter-spacing:0.19px">historic note</a></div><div class="val" style="left:285px;top:7px">HTML</div><div class="val" style="left:449px;top:7px;letter-spacing:.35px">[0..*]</div><svg class="abs" style="left:517.500px;top:10px" width="12" height="14" viewBox="0 0 13 15" preserveAspectRatio="none"><g fill="none" stroke="#111" stroke-width="1.400"><path d="M0.500 3h12M4.300 3V1h4.400v2M2 3v10.200a1 1 0 0 0 1 1h7a1 1 0 0 0 1-1V3M5 5.800v5.600M8 5.800v5.600"/></g></svg></div>
<div class="row" style="top:639px;background:#f7f7f7"><div class="abs" style="left:8px;top:13px;width:0;height:0;border-top:4.500px solid transparent;border-bottom:4.500px solid transparent;border-left:5px solid #111"></div><div class="gi" style="left:18px;top:12.500px;width:14px;height:10px"></div><div class="val" style="left:38px;top:7px"><a style="letter-spacing:0.27px">independent</a></div><div class="val" style="left:285px;top:7px">boolean</div><div class="val" style="left:449px;top:7px;letter-spacing:.35px">[0..1]</div><svg class="abs" style="left:517.500px;top:10px" width="12" height="14" viewBox="0 0 13 15" preserveAspectRatio="none"><g fill="none" stroke="#111" stroke-width="1.400"><path d="M0.500 3h12M4.300 3V1h4.400v2M2 3v10.200a1 1 0 0 0 1 1h7a1 1 0 0 0 1-1V3M5 5.800v5.600M8 5.800v5.600"/></g></svg></div>
<div class="row" style="top:674px;background:#fff"><div class="abs" style="left:8px;top:13px;width:0;height:0;border-top:4.500px solid transparent;border-bottom:4.500px solid transparent;border-left:5px solid #111"></div><div class="gi" style="left:18px;top:12.500px;width:14px;height:10px"></div><div class="val" style="left:38px;top:7px"><a style="letter-spacing:0px">iso 3166 full name</a></div><div class="val" style="left:285px;top:7px">langString or string</div><div class="val" style="left:449px;top:7px;letter-spacing:.35px">[0..*]</div><svg class="abs" style="left:517.500px;top:10px" width="12" height="14" viewBox="0 0 13 15" preserveAspectRatio="none"><g fill="none" stroke="#111" stroke-width="1.400"><path d="M0.500 3h12M4.300 3V1h4.400v2M2 3v10.200a1 1 0 0 0 1 1h7a1 1 0 0 0 1-1V3M5 5.800v5.600M8 5.800v5.600"/></g></svg></div>
<div class="row" style="top:709px;background:#f7f7f7"><div class="abs" style="left:8px;top:13px;width:0;height:0;border-top:4.500px solid transparent;border-bottom:4.500px solid transparent;border-left:5px solid #111"></div><div class="gi" style="left:18px;top:12.500px;width:14px;height:10px"></div><div class="val" style="left:38px;top:7px"><a style="letter-spacing:-0.07px">iso 3166 numeric code</a></div><div class="val" style="left:285px;top:7px">string</div><div class="val" style="left:449px;top:7px;letter-spacing:.35px">[0..*]</div><svg class="abs" style="left:517.500px;top:10px" width="12" height="14" viewBox="0 0 13 15" preserveAspectRatio="none"><g fill="none" stroke="#111" stroke-width="1.400"><path d="M0.500 3h12M4.300 3V1h4.400v2M2 3v10.200a1 1 0 0 0 1 1h7a1 1 0 0 0 1-1V3M5 5.800v5.600M8 5.800v5.600"/></g></svg></div>
</body>
</html>
